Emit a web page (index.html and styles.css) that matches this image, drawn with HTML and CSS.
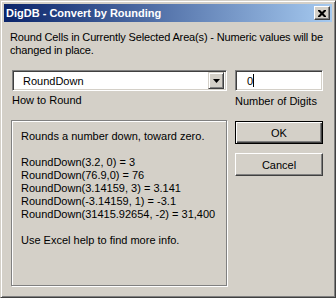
FILE: index.html
```html
<!DOCTYPE html>
<html>
<head>
	<meta charset="UTF-8">
	<link rel="stylesheet" href="styles.css">
</head>
<body>
	<div class="window">
		<div class="title_bar">
			<span class="title_text">DigDB - Convert by Rounding</span>
			<span class="close_btn">
				<svg width="8" height="7" viewBox="0 0 8 7"><path d="M0 0h2l2 2 2-2h2v1l-2.5 2.5 2.5 2.5v1h-2l-2-2-2 2h-2v-1l2.5-2.5-2.5-2.5z" fill="#000"/></svg>
			</span>
		</div>

		<div class="content">
			<p class="intro">Round Cells in Currently Selected Area(s) - Numeric values will be<br>changed in place.</p>

			<div class="main_row">
				<div class="left_col">
					<div class="combo">
						<span class="combo_text">RoundDown</span>
						<span class="combo_btn">
							<svg width="7" height="4" viewBox="0 0 7 4"><path d="M0 0h7l-3.5 4z" fill="#000"/></svg>
						</span>
					</div>
					<div class="field_label">How to Round</div>

					<div class="info_panel">
						<p>Rounds a number down, toward zero.</p>
						<p>RoundDown(3.2, 0) = 3<br>
						RoundDown(76.9,0) = 76<br>
						RoundDown(3.14159, 3) = 3.141<br>
						RoundDown(-3.14159, 1) = -3.1<br>
						RoundDown(31415.92654, -2) = 31,400</p>
						<p>Use Excel help to find more info.</p>
					</div>
				</div>

				<div class="right_col">
					<div class="text_box"><span class="digits">0</span><span class="caret"></span></div>
					<div class="field_label digits_label">Number of Digits</div>
					<div class="btn btn_default"><span>OK</span></div>
					<div class="btn"><span>Cancel</span></div>
				</div>
			</div>
		</div>
	</div>
</body>
</html>
```

FILE: styles.css
```css
body{
	margin:0;
	background:#d4d0c8;
	font-family:"Liberation Sans", Arial, sans-serif;
	font-size:11px;
	color:#000;
}

.window{
	box-sizing:border-box;
	width:336px;
	height:298px;
	background:#d4d0c8;
	border-top:1px solid #d4d0c8;
	border-left:1px solid #d4d0c8;
	border-right:1px solid #404040;
	border-bottom:1px solid #404040;
	box-shadow:inset 1px 1px 0 #fff, inset -1px -1px 0 #808080;
	padding:3px;
}

.title_bar{
	height:18px;
	display:flex;
	align-items:center;
	justify-content:space-between;
	padding:0 2px;
	background:linear-gradient(to right, #0a246a, #a6caf0);
}
.title_text{
	color:#fff;
	font-weight:bold;
	font-size:11px;
}
.close_btn{
	box-sizing:border-box;
	width:16px;
	height:14px;
	display:flex;
	align-items:center;
	justify-content:center;
	background:#d4d0c8;
	border-top:1px solid #fff;
	border-left:1px solid #fff;
	border-right:1px solid #404040;
	border-bottom:1px solid #404040;
	box-shadow:inset -1px -1px 0 #808080;
}

.content{
	padding:9px 6px 0 6px;
}
.intro{
	margin:0;
	line-height:13px;
	white-space:nowrap;
	letter-spacing:-0.15px;
}

.main_row{
	display:flex;
	margin-top:13px;
	padding-left:2px;
}
.left_col{
	width:215px;
}
.right_col{
	width:88px;
	margin-left:8px;
}

.combo{
	box-sizing:border-box;
	height:21px;
	display:flex;
	align-items:center;
	justify-content:space-between;
	background:#fff;
	border-top:1px solid #808080;
	border-left:1px solid #808080;
	border-right:1px solid #fff;
	border-bottom:1px solid #fff;
	box-shadow:inset 1px 1px 0 #404040, inset -1px -1px 0 #d4d0c8;
	padding:2px 2px 2px 10px;
}
.combo_btn{
	box-sizing:border-box;
	width:16px;
	height:17px;
	display:flex;
	align-items:center;
	justify-content:center;
	background:#d4d0c8;
	border-top:1px solid #d4d0c8;
	border-left:1px solid #d4d0c8;
	border-right:1px solid #404040;
	border-bottom:1px solid #404040;
	box-shadow:inset 1px 1px 0 #fff, inset -1px -1px 0 #808080;
}

.text_box{
	box-sizing:border-box;
	height:21px;
	display:flex;
	align-items:center;
	background:#fff;
	border-top:1px solid #808080;
	border-left:1px solid #808080;
	border-right:1px solid #fff;
	border-bottom:1px solid #fff;
	box-shadow:inset 1px 1px 0 #404040, inset -1px -1px 0 #d4d0c8;
	padding-left:11px;
}
.caret{
	display:block;
	width:1px;
	height:13px;
	background:#000;
}

.field_label{
	line-height:13px;
	margin-top:3px;
	height:13px;
}
.digits_label{
	margin-top:4px;
}

.info_panel{
	box-sizing:border-box;
	height:166px;
	margin-top:13px;
	margin-left:-1px;
	border:1px solid #808080;
	box-shadow:1px 1px 0 #fff, inset 1px 1px 0 #fff;
	padding:9px 9px;
	line-height:13px;
}
.info_panel p{
	margin:0 0 13px 0;
}

.btn{
	box-sizing:border-box;
	height:23px;
	display:flex;
	align-items:center;
	justify-content:center;
	margin-top:9px;
	background:#d4d0c8;
	border-top:1px solid #fff;
	border-left:1px solid #fff;
	border-right:1px solid #404040;
	border-bottom:1px solid #404040;
	box-shadow:inset -1px -1px 0 #808080;
}
.btn_default{
	margin-top:13px;
	border:1px solid #000;
	box-shadow:inset 1px 1px 0 #fff, inset -1px -1px 0 #404040, inset -2px -2px 0 #808080;
}
```
